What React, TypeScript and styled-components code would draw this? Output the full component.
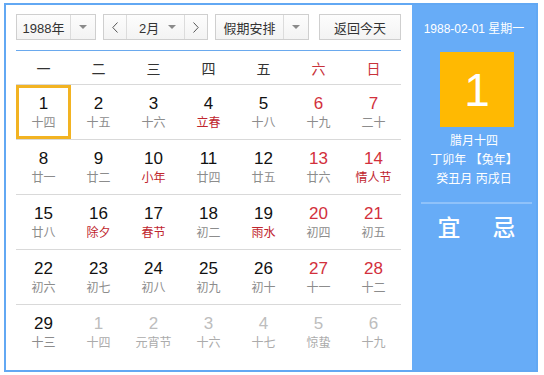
import React from "react";
import styled, { createGlobalStyle } from "styled-components";

const GlobalStyle = createGlobalStyle`
  body {
    margin: 0;
    background: #fff;
    font-family: "Liberation Sans", "Noto Sans CJK SC", sans-serif;
  }
`;

type Day = { n: number; lunar: string; holiday?: boolean; other?: boolean; selected?: boolean };

const weekdays = ["一", "二", "三", "四", "五", "六", "日"];

const weeks: Day[][] = [
  [
    { n: 1, lunar: "十四", selected: true },
    { n: 2, lunar: "十五" },
    { n: 3, lunar: "十六" },
    { n: 4, lunar: "立春", holiday: true },
    { n: 5, lunar: "十八" },
    { n: 6, lunar: "十九" },
    { n: 7, lunar: "二十" },
  ],
  [
    { n: 8, lunar: "廿一" },
    { n: 9, lunar: "廿二" },
    { n: 10, lunar: "小年", holiday: true },
    { n: 11, lunar: "廿四" },
    { n: 12, lunar: "廿五" },
    { n: 13, lunar: "廿六" },
    { n: 14, lunar: "情人节", holiday: true },
  ],
  [
    { n: 15, lunar: "廿八" },
    { n: 16, lunar: "除夕", holiday: true },
    { n: 17, lunar: "春节", holiday: true },
    { n: 18, lunar: "初二" },
    { n: 19, lunar: "雨水", holiday: true },
    { n: 20, lunar: "初四" },
    { n: 21, lunar: "初五" },
  ],
  [
    { n: 22, lunar: "初六" },
    { n: 23, lunar: "初七" },
    { n: 24, lunar: "初八" },
    { n: 25, lunar: "初九" },
    { n: 26, lunar: "初十" },
    { n: 27, lunar: "十一" },
    { n: 28, lunar: "十二" },
  ],
  [
    { n: 29, lunar: "十三" },
    { n: 1, lunar: "十四", other: true },
    { n: 2, lunar: "元宵节", other: true },
    { n: 3, lunar: "十六", other: true },
    { n: 4, lunar: "十七", other: true },
    { n: 5, lunar: "惊蛰", other: true },
    { n: 6, lunar: "十九", other: true },
  ],
];

const Page = styled.div`
  padding: 3px 0 0 4px;
`;

const Frame = styled.div`
  display: flex;
  width: 530px;
  height: 365px;
  border: 2px solid #62a8f3;
`;

const Main = styled.div`
  width: 385px;
  padding: 9px 11px 0 10px;
  background: #fff;
`;

const Toolbar = styled.div`
  display: flex;
  align-items: center;
  height: 26px;
  padding-bottom: 10px;
  border-bottom: 1px solid #6aa9ee;
`;

const Group = styled.div<{ $w: number; $ml?: number }>`
  display: flex;
  width: ${(p) => p.$w}px;
  height: 26px;
  margin-left: ${(p) => p.$ml ?? 0}px;
  border: 1px solid #cfcfcf;
  box-sizing: border-box;
  background: linear-gradient(#fdfdfd, #f3f3f3);
  font-size: 13px;
  color: #333;
`;

const Label = styled.div<{ $start?: boolean }>`
  flex: 1;
  display: flex;
  align-items: center;
  justify-content: ${(p) => (p.$start ? "flex-start" : "center")};
  padding-left: ${(p) => (p.$start ? "12px" : "0")};
`;

const Part = styled.div<{ $w: number; $side?: "left" | "right" }>`
  width: ${(p) => p.$w}px;
  display: flex;
  align-items: center;
  justify-content: center;
  ${(p) => (p.$side === "left" ? "border-left: 1px solid #dcdcdc;" : "")}
  ${(p) => (p.$side === "right" ? "border-right: 1px solid #dcdcdc;" : "")}
`;

const Caret = styled.span`
  width: 0;
  height: 0;
  border-left: 4px solid transparent;
  border-right: 4px solid transparent;
  border-top: 4px solid #8a8a8a;
`;

const TodayButton = styled.div`
  display: flex;
  align-items: center;
  justify-content: center;
  margin-left: auto;
  width: 82px;
  height: 26px;
  box-sizing: border-box;
  border: 1px solid #cfcfcf;
  background: linear-gradient(#fdfdfd, #f3f3f3);
  font-size: 13px;
  color: #333;
`;

const Grid = styled.div`
  display: grid;
  grid-template-columns: repeat(7, 55px);
`;

const HeadCell = styled.div<{ $red: boolean }>`
  height: 33px;
  display: flex;
  align-items: center;
  justify-content: center;
  font-size: 14px;
  color: ${(p) => (p.$red ? "#c8323a" : "#333")};
  border-bottom: 1px solid #d9d9d9;
`;

const Cell = styled.div<{ $last: boolean; $selected?: boolean }>`
  height: 54px;
  display: flex;
  flex-direction: column;
  align-items: center;
  border-bottom: ${(p) => (p.$last ? "none" : "1px solid #d9d9d9")};
  box-shadow: ${(p) => (p.$selected ? "inset 0 0 0 3px #f2b322" : "none")};
`;

const DayNum = styled.div<{ $tone: "normal" | "red" | "other" }>`
  margin-top: 9px;
  font-size: 17px;
  line-height: 20px;
  color: ${(p) => (p.$tone === "red" ? "#d2303c" : p.$tone === "other" ? "#bdbdbd" : "#111")};
`;

const Lunar = styled.div<{ $tone: "normal" | "holiday" | "other" }>`
  font-size: 12px;
  line-height: 18px;
  color: ${(p) => (p.$tone === "holiday" ? "#c0262e" : p.$tone === "other" ? "#ababab" : "#8c8c8c")};
`;

const Side = styled.div`
  flex: 1;
  display: flex;
  flex-direction: column;
  align-items: center;
  background: #67acf7;
  color: #fff;
  padding-top: 16px;
`;

const SideDate = styled.div`
  font-size: 12px;
  line-height: 16px;
`;

const BigDay = styled.div`
  margin-top: 15px;
  margin-left: 6px;
  width: 74px;
  height: 75px;
  display: flex;
  align-items: center;
  justify-content: center;
  background: #ffb902;
  font-family: "Liberation Sans", sans-serif;
  font-size: 46px;
  color: #fff;
`;

const LunarInfo = styled.div`
  margin-top: 5px;
  font-size: 12px;
  line-height: 19px;
  text-align: center;
`;

const Divider = styled.div`
  width: 111px;
  margin: 13px 0 0 5px;
  height: 2px;
  background: #8fc2fa;
`;

const Advice = styled.div`
  display: flex;
  gap: 32px;
  margin: 10px 0 0 5px;
  font-size: 23px;
  line-height: 28px;
  font-weight: 500;
`;

const Chevron = ({ dir }: { dir: "left" | "right" }) => (
  <svg width="6" height="11" viewBox="0 0 6 11">
    <polyline
      points={dir === "left" ? "5.5,0.5 0.8,5.5 5.5,10.5" : "0.5,0.5 5.2,5.5 0.5,10.5"}
      fill="none"
      stroke="#555"
      strokeWidth="1"
    />
  </svg>
);

export default function App() {
  return (
    <Page>
      <GlobalStyle />
      <Frame>
        <Main>
          <Toolbar>
            <Group $w={80}>
              <Label>1988年</Label>
              <Part $w={24} $side="left">
                <Caret />
              </Part>
            </Group>
            <Group $w={105} $ml={7}>
              <Part $w={22} $side="right">
                <Chevron dir="left" />
              </Part>
              <Label $start>2月</Label>
              <Part $w={24}>
                <Caret />
              </Part>
              <Part $w={22} $side="left">
                <Chevron dir="right" />
              </Part>
            </Group>
            <Group $w={94} $ml={7}>
              <Label>假期安排</Label>
              <Part $w={24} $side="left">
                <Caret />
              </Part>
            </Group>
            <TodayButton>返回今天</TodayButton>
          </Toolbar>
          <Grid>
            {weekdays.map((w, i) => (
              <HeadCell key={w} $red={i >= 5}>
                {w}
              </HeadCell>
            ))}
            {weeks.map((week, wi) =>
              week.map((d, di) => (
                <Cell key={`${wi}-${di}`} $last={wi === weeks.length - 1} $selected={d.selected}>
                  <DayNum $tone={d.other ? "other" : di >= 5 ? "red" : "normal"}>{d.n}</DayNum>
                  <Lunar $tone={d.other ? "other" : d.holiday ? "holiday" : "normal"}>{d.lunar}</Lunar>
                </Cell>
              ))
            )}
          </Grid>
        </Main>
        <Side>
          <SideDate>1988-02-01 星期一</SideDate>
          <BigDay>1</BigDay>
          <LunarInfo>
            腊月十四
            <br />
            丁卯年 【兔年】
            <br />
            癸丑月 丙戌日
          </LunarInfo>
          <Divider />
          <Advice>
            <span>宜</span>
            <span>忌</span>
          </Advice>
        </Side>
      </Frame>
    </Page>
  );
}
